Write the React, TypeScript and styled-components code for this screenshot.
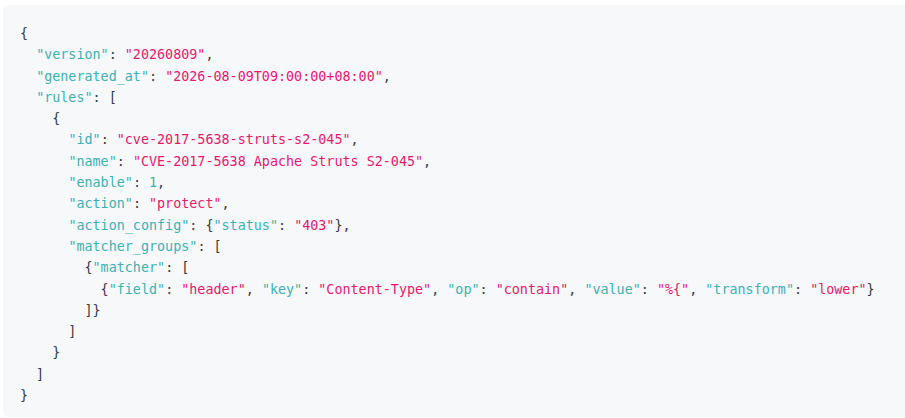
import React from "react";
import styled, { createGlobalStyle } from "styled-components";

const Global = createGlobalStyle`
  html, body { margin: 0; padding: 0; background: #ffffff; overflow: hidden; }
  body { width: 905px; height: 418px; }
`;

const Page = styled.div`
  padding: 5px 0 0 3px;
  width: 920px;
`;

const CodeBlock = styled.pre`
  margin: 0;
  box-sizing: border-box;
  width: 920px;
  height: 412px;
  background: #f6f8fa;
  border-radius: 6px;
  padding: 18px 17px;
  font-family: "DejaVu Sans Mono", "Liberation Mono", monospace;
  font-size: 13.4px;
  line-height: 21.3px;
  color: #383a42;
  white-space: pre;
`;

const Line = styled.div`
  height: 21.3px;
`;

type Kind = "key" | "str" | "num" | "punc";

const Token = styled.span<{ $kind: Kind }>`
  color: ${(p) =>
    p.$kind === "key" || p.$kind === "num"
      ? "#3fb0b0"
      : p.$kind === "str"
      ? "#e6196a"
      : "#383a42"};
`;

type Tok = [Kind, string];

const k = (s: string): Tok => ["key", `"${s}"`];
const s = (v: string): Tok => ["str", `"${v}"`];
const n = (v: string): Tok => ["num", v];
const p = (v: string): Tok => ["punc", v];

const lines: Tok[][] = [
  [p("{")],
  [p("  "), k("version"), p(": "), s("20260809"), p(",")],
  [p("  "), k("generated_at"), p(": "), s("2026-08-09T09:00:00+08:00"), p(",")],
  [p("  "), k("rules"), p(": [")],
  [p("    {")],
  [p("      "), k("id"), p(": "), s("cve-2017-5638-struts-s2-045"), p(",")],
  [p("      "), k("name"), p(": "), s("CVE-2017-5638 Apache Struts S2-045"), p(",")],
  [p("      "), k("enable"), p(": "), n("1"), p(",")],
  [p("      "), k("action"), p(": "), s("protect"), p(",")],
  [p("      "), k("action_config"), p(": {"), k("status"), p(": "), s("403"), p("},")],
  [p("      "), k("matcher_groups"), p(": [")],
  [p("        {"), k("matcher"), p(": [")],
  [
    p("          {"),
    k("field"),
    p(": "),
    s("header"),
    p(", "),
    k("key"),
    p(": "),
    s("Content-Type"),
    p(", "),
    k("op"),
    p(": "),
    s("contain"),
    p(", "),
    k("value"),
    p(": "),
    s("%{"),
    p(", "),
    k("transform"),
    p(": "),
    s("lower"),
    p("}"),
  ],
  [p("        ]}")],
  [p("      ]")],
  [p("    }")],
  [p("  ]")],
  [p("}")],
];

export default function App() {
  return (
    <Page>
      <Global />
      <CodeBlock>
        {lines.map((toks, i) => (
          <Line key={i}>
            {toks.map(([kind, text], j) => (
              <Token key={j} $kind={kind}>
                {text}
              </Token>
            ))}
          </Line>
        ))}
      </CodeBlock>
    </Page>
  );
}
